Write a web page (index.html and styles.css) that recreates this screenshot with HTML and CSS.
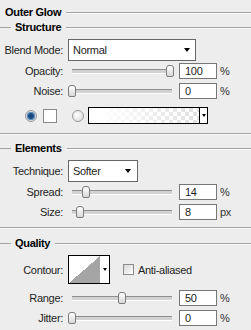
FILE: index.html
```html
<!DOCTYPE HTML>
<html>
<head>
<meta charset="utf-8">
<title>Outer Glow</title>
<link rel="stylesheet" href="styles.css">
</head>

<body>
<div class="panel">
	<div class="head"><b>Outer Glow</b><i class="rule"></i></div>

	<div class="legend"><i class="dash"></i><b>Structure</b><i class="rule"></i></div>
	<div class="row r-select">
		<label>Blend Mode:</label>
		<div class="select blend">Normal<span class="arrow"></span></div>
	</div>
	<div class="row r-first">
		<label>Opacity:</label>
		<div class="slider"><span class="thumb" style="left:98px"></span></div>
		<div class="num">100</div><span class="unit">%</span>
	</div>
	<div class="row r-next">
		<label>Noise:</label>
		<div class="slider"><span class="thumb" style="left:0px"></span></div>
		<div class="num">0</div><span class="unit">%</span>
	</div>
	<div class="colors">
		<span class="radio on"></span>
		<span class="swatch"></span>
		<span class="radio"></span>
		<div class="grad"><span class="fill"></span><span class="drop"><i class="arrow small"></i></span></div>
	</div>

	<div class="sep s-elements"></div>
	<div class="legend"><i class="dash"></i><b>Elements</b><i class="rule"></i></div>
	<div class="row r-select">
		<label>Technique:</label>
		<div class="select tech">Softer<span class="arrow"></span></div>
	</div>
	<div class="row r-first">
		<label>Spread:</label>
		<div class="slider"><span class="thumb" style="left:14px"></span></div>
		<div class="num">14</div><span class="unit">%</span>
	</div>
	<div class="row r-next">
		<label>Size:</label>
		<div class="slider"><span class="thumb" style="left:8px"></span></div>
		<div class="num">8</div><span class="unit">px</span>
	</div>

	<div class="sep s-quality"></div>
	<div class="legend"><i class="dash"></i><b>Quality</b><i class="rule"></i></div>
	<div class="row r-contour">
		<label>Contour:</label>
		<div class="contour"><span class="curve"></span><span class="drop"><i class="arrow small"></i></span></div>
		<span class="check"></span><span class="check-label">Anti-aliased</span>
	</div>
	<div class="row r-range">
		<label>Range:</label>
		<div class="slider"><span class="thumb" style="left:50px"></span></div>
		<div class="num">50</div><span class="unit">%</span>
	</div>
	<div class="row r-next">
		<label>Jitter:</label>
		<div class="slider"><span class="thumb" style="left:0px"></span></div>
		<div class="num">0</div><span class="unit">%</span>
	</div>
</div>
</body>
</html>
```

FILE: styles.css
```css
* {margin:0; padding:0; box-sizing:border-box;}
body {background:#ededed; font:11px "Liberation Sans", Arial, sans-serif; color:#1e1e1e; letter-spacing:-0.3px;}
b {font-weight:bold; color:#000;}
i {font-style:normal;}

.panel {width:251px; padding-top:5px;}

/* section titles */
.head, .legend {display:flex; align-items:center; height:14px;}
.head b {margin-left:5px;}
.legend {margin-top:1px;}
.legend .dash {width:11px; height:1px; background:#a4a4a4; margin-right:4px;}
.rule {flex:1; height:1px; background:#a4a4a4; margin-left:5px; box-shadow:0 1px 0 #fafafa;}
.sep {height:1px; background:#a4a4a4; box-shadow:0 1px 0 #fafafa;}
.s-elements {margin-top:9px;}
.s-quality {margin-top:7px;}
.sep + .legend {margin-top:7px;}
.s-quality + .legend {margin-top:8px;}

/* rows */
.row {display:flex; align-items:center;}
.row label {width:63px; text-align:right; margin-right:5px;}
.r-select {margin-top:5px; height:22px;}
.r-first {margin-top:2px; height:16px;}
.r-next {margin-top:4px; height:16px;}
.r-contour {margin-top:5px; height:29px;}
.r-range {margin-top:6px; height:16px;}

/* drop-down */
.select {height:22px; border:1px solid #666; background:#fff; display:flex; align-items:center; padding-left:4px;}
.select.blend {width:128px;}
.select.tech {width:70px;}
.arrow {width:0; height:0; margin-left:auto; margin-right:5px; border-left:3.5px solid transparent; border-right:3.5px solid transparent; border-top:4px solid #000;}
.select.tech .arrow {margin-right:6px;}
.arrow.small {margin:0; border-left-width:2.5px; border-right-width:2.5px; border-top-width:3px;}

/* slider */
.slider {position:relative; width:106px; height:16px; margin-right:5px;}
.slider:before {content:""; position:absolute; left:4px; right:2px; top:6px; height:3px; border-top:1px solid #8e8e8e; border-bottom:1px solid #fff; background:#d2d2d2;}
.thumb {position:absolute; top:2px; width:8px; height:12px; border:1px solid #7c7c7c; border-radius:3px 3px 2px 2px; background:linear-gradient(#fff, #d8d8d8);}

.num {width:38px; height:16px; border:1px solid #777; background:#fff; padding-left:5px; line-height:14px;}
.unit {margin-left:3px; color:#333;}

/* colour row */
.colors {display:flex; align-items:center; height:17px; margin-top:8px; padding-left:25px;}
.radio {width:12px; height:12px; border-radius:50%; border:1px solid #9a9a9a; background:radial-gradient(circle at 40% 40%, #fff, #d4d4d4);}
.radio.on {background:radial-gradient(circle, #1a4a7e 0 2.5px, #5d8fc2 3.2px 4px, #e2e2e2 4.6px);}
.swatch {width:14px; height:14px; border:1px solid #8a8a8a; background:#fff; margin:0 15px 0 6px;}
.grad {width:120px; height:17px; margin-left:4px; border:1px solid #000; display:flex;}
.grad .fill {flex:1; background:linear-gradient(to right, #fff 8%, rgba(255,255,255,0.35)), repeating-conic-gradient(#d0d0d0 0 25%, #fff 0 50%) 0 0/8px 8px;}
.drop {width:8px; display:flex; align-items:center; justify-content:center; background:#fff;}
.grad .drop {border-left:1px solid #000;}

/* contour */
.contour {width:42px; height:29px; border:1px solid #000; background:#fff; display:flex;}
.curve {width:31px; background:linear-gradient(to top left, #a5a5a5 50%, #fff 50%);}
.contour .drop {flex:1;}
.check {width:11px; height:11px; margin-left:13px; border:1px solid #8c8c8c; background:linear-gradient(135deg, #d6d6d6, #fff);}
.check-label {margin-left:4px;}
```
